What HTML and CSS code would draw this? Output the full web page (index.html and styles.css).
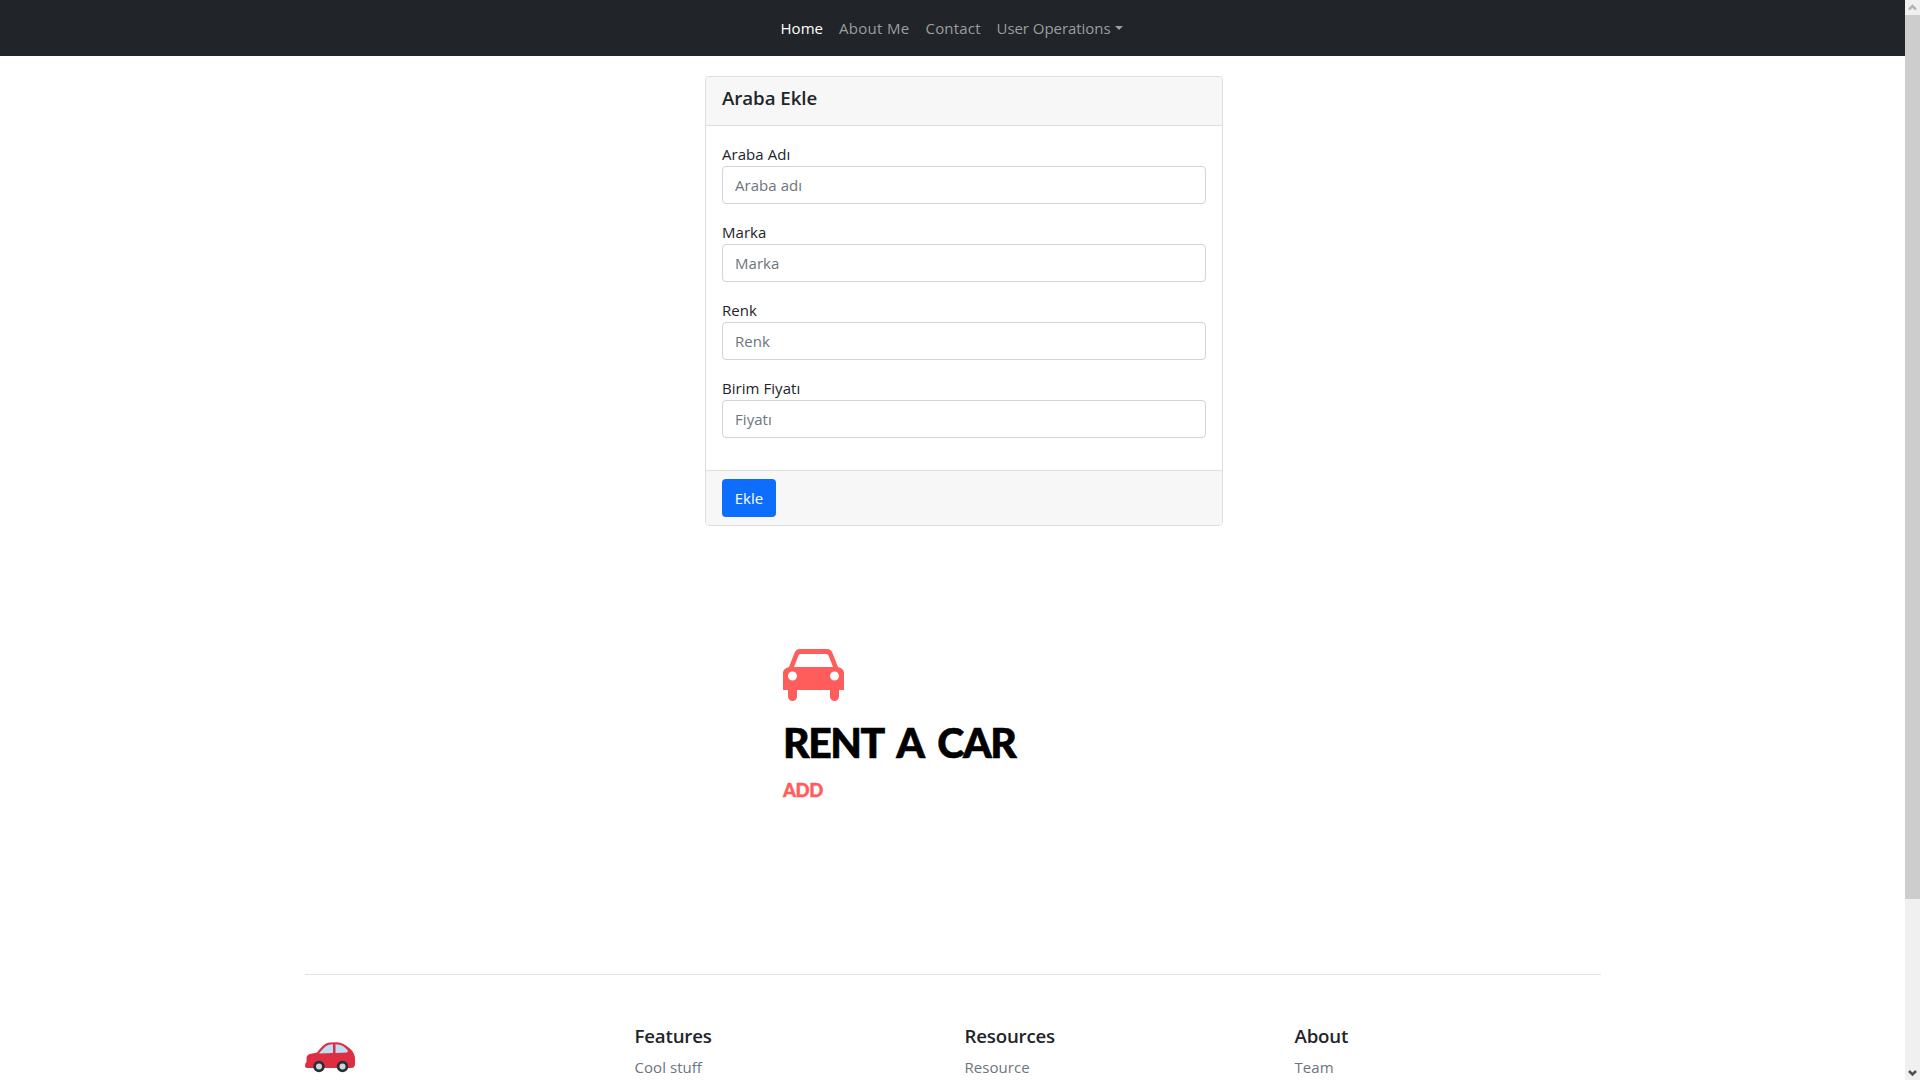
FILE: index.html
```html
<!DOCTYPE html>
<html lang="tr">
<head>
<meta charset="utf-8">
<title>Rent A Car</title>
<link rel="stylesheet" href="styles.css">
</head>
<body>
<div class="page">
  <nav class="navbar">
    <a class="nav-link nav-home active">Home</a>
    <a class="nav-link nav-about">About Me</a>
    <a class="nav-link nav-contact">Contact</a>
    <a class="nav-link nav-user">User Operations<span class="caret"></span></a>
  </nav>
  <main class="main">
    <form class="card">
      <header class="card-header"><h5 class="heading">Araba Ekle</h5></header>
      <div class="card-body">
        <div class="field"><label for="name">Araba Adı</label><input id="name" type="text" placeholder="Araba adı"></div>
        <div class="field"><label for="brand">Marka</label><input id="brand" type="text" placeholder="Marka"></div>
        <div class="field"><label for="color">Renk</label><input id="color" type="text" placeholder="Renk"></div>
        <div class="field"><label for="price">Birim Fiyatı</label><input id="price" type="text" placeholder="Fiyatı"></div>
      </div>
      <footer class="card-footer"><button class="btn" type="button">Ekle</button></footer>
    </form>
    <section class="brand">
      <svg class="brand-icon" width="61" height="52" viewBox="0 0 61 52">
        <path fill="#ff5c5c" fill-rule="evenodd" d="M0 41V24Q0 19.500 6 18L11.500 4Q13 0 17 0H44Q48 0 49.500 4L55 18Q61 19.500 61 24V41H56V47.500A4.500 4.500 0 0 1 47 47.500V41H14V47.500A4.500 4.500 0 0 1 5 47.500V41ZM11 18H50L45.500 6.500Q45 5 43.500 5H17.500Q16 5 15.500 6.500ZM9.500 22.500A4.500 4.500 0 1 0 9.500 31.500A4.500 4.500 0 1 0 9.500 22.500ZM51.500 22.500A4.500 4.500 0 1 0 51.500 31.500A4.500 4.500 0 1 0 51.500 22.500Z"/>
      </svg>
      <div class="brand-title">RENT A CAR</div>
      <div class="brand-action">ADD</div>
    </section>
  </main>
  <footer class="footer">
    <div class="column">
      <svg class="car-logo" width="50" height="31" viewBox="0 0 50 31">
        <path fill="#dd2e44" d="M0 24Q0 21 1.500 20V16Q2 12.500 5 12L12 10.500Q17 4 21 1.500Q23 .3 32 .3Q38 .3 46 7.500Q50 12 50 17V22Q50 26 46 26H3Q0 26 0 24Z"/>
        <path fill="#bbddf5" d="M14 11.500Q19 5 23 3Q25 2.200 28 2.200V11Z"/>
        <path fill="#bbddf5" d="M30.500 2.200Q35 2.200 38 4Q42 7 43 9L42 10.500L30.500 11Z"/>
        <circle cx="14" cy="24.500" r="5.700" fill="#292f33"/><circle cx="14" cy="24.500" r="3" fill="#ccd6dd"/>
        <circle cx="37.500" cy="24.500" r="5.700" fill="#292f33"/><circle cx="37.500" cy="24.500" r="3" fill="#ccd6dd"/>
      </svg>
    </div>
    <div class="column"><h5 class="heading">Features</h5><a class="footer-link">Cool stuff</a></div>
    <div class="column"><h5 class="heading">Resources</h5><a class="footer-link">Resource</a></div>
    <div class="column"><h5 class="heading">About</h5><a class="footer-link">Team</a></div>
  </footer>
</div>
<aside class="scrollbar">
  <svg class="arrow arrow-up" width="15" height="15" viewBox="0 0 15 15"><path d="M4 9.500L7.500 6L11 9.500" fill="none" stroke="#b5b5b5" stroke-width="2.500"/></svg>
  <div class="thumb"></div>
  <svg class="arrow" width="15" height="15" viewBox="0 0 15 15"><path d="M4 6L7.500 9.500L11 6" fill="none" stroke="#505050" stroke-width="2.500"/></svg>
</aside>
</body>
</html>
```
FILE: styles.css
```css
* { box-sizing: border-box; }
body {
  margin: 0;
  height: 1080px;
  overflow: hidden;
  display: flex;
  background: #fff;
  color: #212529;
  font: 15px/24px "Open Sans", "Noto Sans", sans-serif;
  letter-spacing: 0.05px;
}
.page { width: 1905px; height: 1080px; overflow: hidden; }
.navbar {
  height: 56px;
  display: flex;
  align-items: center;
  justify-content: center;
  background: #212529;
}
.nav-link { padding: 0 8px; color: #9b9d9e; white-space: nowrap; }
.nav-home { width: 58.500px; }
.nav-about { width: 86.500px; letter-spacing: 0.3px; }
.nav-contact { width: 71px; letter-spacing: 0.2px; }
.nav-user { width: 144px; letter-spacing: -0.05px; }
.active { color: #fff; }
.caret {
  display: inline-block;
  margin-left: 4px;
  vertical-align: 4px;
  border: 4.800px solid transparent;
  border-top-color: currentColor;
  border-bottom: 0;
}
.main { height: 918px; padding: 20px 0 0 705px; }
.card {
  width: 518px;
  height: 450px;
  border: 1px solid #dfdfdf;
  border-radius: 4px;
  overflow: hidden;
}
.card-header {
  height: 49px;
  padding: 9px 16px 7px;
  background: #f7f7f7;
  border-bottom: 1px solid #dfdfdf;
}
.heading { margin: 0 0 8px; font-size: 18.700px; line-height: 24px; font-weight: 600; letter-spacing: -0.2px; }
.card-header .heading { letter-spacing: -0.05px; }
.card-body { height: 344px; padding: 16px; }
.field { height: 62px; margin-bottom: 16px; }
.field label { display: block; height: 24px; }
.field input {
  display: block;
  width: 100%;
  height: 38px;
  padding: 6px 12px;
  border: 1px solid #ced4da;
  border-radius: 4px;
  font: inherit;
  letter-spacing: inherit;
}
.field input::placeholder { color: #6c757d; opacity: 1; }
.card-footer { height: 56px; padding: 8px 16px; background: #f7f7f7; border-top: 1px solid #dfdfdf; }
.btn {
  display: block;
  width: 54px;
  height: 38px;
  padding: 0;
  border: 0;
  border-radius: 4px;
  background: #0d6efd;
  color: #fff;
  font: inherit;
  letter-spacing: inherit;
}
.brand { padding: 123px 0 0 78px; font-family: Lato, sans-serif; font-weight: 900; }
.brand-icon { display: block; }
.brand-title {
  margin-top: 17px;
  font-size: 41px;
  line-height: 50px;
  letter-spacing: -1.5px;
  word-spacing: 7px;
  color: #000;
  -webkit-text-stroke: 0.6px #000;
}
.brand-action { margin-top: 10px; font-size: 18.500px; line-height: 24px; letter-spacing: -0.4px; color: #ff5c5c; -webkit-text-stroke: 0.4px #ff5c5c; }
.footer {
  width: 1296px;
  margin-left: 304.500px;
  padding-top: 49px;
  display: grid;
  grid-template-columns: repeat(4, 330px);
  border-top: 1px solid #dee2e6;
}
.footer .heading { margin-bottom: 7px; }
.footer-link { display: block; color: #6c757d; }
.car-logo { display: block; margin-top: 18px; }
.scrollbar { width: 15px; background: #f0f0f0; display: flex; flex-direction: column; }
.thumb { height: 884px; background: #cdcdcd; margin-bottom: 166px; }
.arrow { display: block; flex: none; }
```
